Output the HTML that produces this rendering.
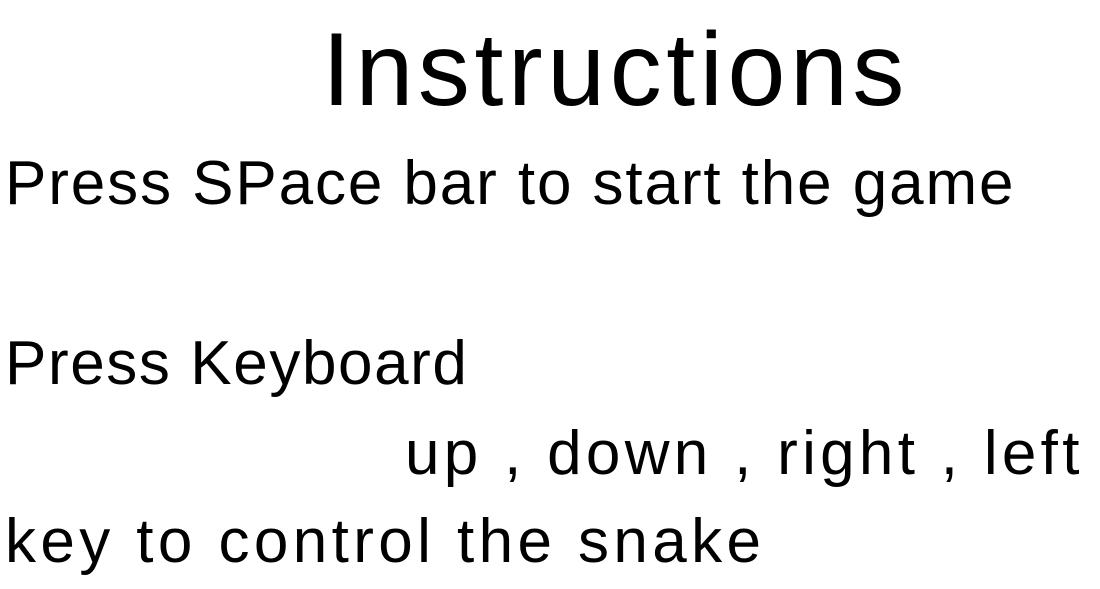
<!DOCTYPE html>
<html><head><meta charset="utf-8"><style>
html,body{margin:0;padding:0;background:#fff;width:1100px;height:589px;overflow:hidden}
body{font-family:"Liberation Sans",sans-serif;color:#000;position:relative}
.t{position:absolute;white-space:nowrap;line-height:1}
</style></head><body>
<div class="t" style="left:322px;top:18px;font-size:104px;letter-spacing:4.6px">Instructions</div>
<div class="t" style="left:5px;top:153px;font-size:62px;letter-spacing:1.9px">Press SPace bar to start the game</div>
<div class="t" style="left:5px;top:333px;font-size:62px;letter-spacing:1.6px">Press Keyboard</div>
<div class="t" style="left:405px;top:423px;font-size:62px;letter-spacing:4.3px">up , down , right , left</div>
<div class="t" style="left:5px;top:511px;font-size:62px;letter-spacing:4.4px">key to control the snake</div>
</body></html>
